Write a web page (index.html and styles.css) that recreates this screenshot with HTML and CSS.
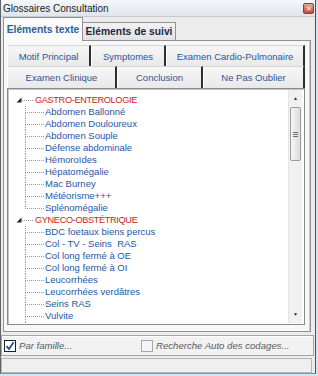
FILE: index.html
```html
<!DOCTYPE html>
<html>

<head>
    <meta charset="UTF-8">
    <meta name="viewport" content="width=device-width, initial-scale=1">
    <title>Glossaires Consultation</title>
    <link rel="stylesheet" href="styles.css">
</head>

<body>
<div class="fenetre">
    <div class="titre">
        <span>Glossaires Consultation</span>
        <span class="fermer">&#x2715;</span>
    </div>

    <div class="onglets">
        <div class="onglet actif">Eléments texte</div>
        <div class="onglet suivi">Eléments de suivi</div>
    </div>

    <div class="panneau">
        <div class="sousrang">
            <div class="sous motif">Motif Principal</div>
            <div class="sous sympt">Symptomes</div>
            <div class="sous cardio">Examen Cardio-Pulmonaire</div>
        </div>
        <div class="sousrang">
            <div class="sous clinique">Examen Clinique</div>
            <div class="sous conclu">Conclusion</div>
            <div class="sous oublier">Ne Pas Oublier</div>
        </div>

        <div class="arbre">
            <ul class="noeuds">
                <li class="famille"><svg class="fleche" width="6" height="6" viewBox="0 0 6 6"><polygon points="5.5,0.5 5.5,5.5 0.5,5.5" fill="#262626"/></svg><span class="nom">GASTRO-ENTEROLOGIE</span><ul class="enfants">
                        <li>Abdomen Ballonné</li>
                        <li>Abdomen Douloureux</li>
                        <li>Abdomen Souple</li>
                        <li>Défense abdominale</li>
                        <li>Hémoroïdes</li>
                        <li>Hépatomégalie</li>
                        <li>Mac Burney</li>
                        <li>Météorisme+++</li>
                        <li>Splénomégalie</li>
                    </ul></li>
                <li class="famille"><svg class="fleche" width="6" height="6" viewBox="0 0 6 6"><polygon points="5.5,0.5 5.5,5.5 0.5,5.5" fill="#262626"/></svg><span class="nom">GYNECO-OBSTÉTRIQUE</span><ul class="enfants">
                        <li>BDC foetaux biens percus</li>
                        <li>Col - TV - Seins &nbsp;RAS</li>
                        <li>Col long fermé à OE</li>
                        <li>Col long fermé à OI</li>
                        <li>Leucorrhées</li>
                        <li>Leucorrhées verdâtres</li>
                        <li>Seins RAS</li>
                        <li>Vulvite</li>
                        <li>Vaginose bactérienne</li>
                    </ul></li>
            </ul>
            <div class="defil">
                <div class="bout">&#9650;</div>
                <div class="curseur"><span></span><span></span><span></span></div>
                <div class="piste"></div>
                <div class="bout">&#9660;</div>
            </div>
        </div>
    </div>

    <div class="options">
        <label class="choix premier"><span class="case coche"><svg width="10" height="10" viewBox="0 0 10 10"><path d="M1.5 5.2 L4 8 L8.6 1.2" fill="none" stroke="#1d4f9d" stroke-width="1.8"/></svg></span>Par famille...</label>
        <label class="choix"><span class="case"></span>Recherche Auto des codages...</label>
    </div>

    <div class="statut"></div>
</div>
</body>

</html>
```

FILE: styles.css
```css
body {
    margin: 0;
    width: 318px;
    height: 376px;
    overflow: hidden;
    background-color: #d2e5f0;
    font-family: "Liberation Sans", Arial, sans-serif;
}

ul {
    list-style: none;
    margin: 0;
    padding: 0;
}

.fenetre {
    width: 316px;
    height: 374px;
    box-sizing: border-box;
    border-left: 1px solid #5f6468;
    border-right: 1px solid #2f5a68;
    border-bottom: 1px solid #7d98a6;
    background-color: #ececec;
    display: flex;
    flex-direction: column;
}

.titre {
    height: 16px;
    flex: none;
    display: flex;
    align-items: center;
    justify-content: space-between;
    padding: 0 1px 0 2px;
    background: linear-gradient(#f4f7fa, #dfe5ec);
    border-bottom: 1px solid #c3cad2;
    font-size: 10px;
    color: #1c1c1c;
}

.fermer {
    width: 9px;
    height: 9px;
    border: 1px solid #8e3b33;
    border-radius: 2px;
    background: linear-gradient(#e8a89c, #c2473c);
    color: white;
    font-size: 7px;
    line-height: 9px;
    text-align: center;
}

.onglets {
    height: 23px;
    flex: none;
    display: flex;
    align-items: flex-end;
    padding-left: 2px;
}

.onglet {
    box-sizing: border-box;
    border: 1px solid #8f9296;
    border-bottom: none;
    font-size: 10.3px;
    font-weight: bold;
    display: flex;
    align-items: center;
    justify-content: center;
}

.actif {
    width: 80px;
    height: 24px;
    margin-bottom: -1px;
    position: relative;
    z-index: 1;
    background-color: #fbfbfb;
    color: #2c5ea6;
}

.suivi {
    width: 93px;
    height: 18px;
    border-left: none;
    background: linear-gradient(#f3f3f3, #e2e2e2);
    color: #1b2a42;
}

.panneau {
    height: 292px;
    flex: none;
    box-sizing: border-box;
    margin: 0 4px 0 2px;
    border: 1px solid #8f9296;
    box-shadow: inset -1px 0 0 #c8cacc;
    background-color: #f8f8f8;
    padding: 4px 4px 0 3px;
    display: flex;
    flex-direction: column;
}

.sousrang {
    display: flex;
    height: 21px;
    flex: none;
}

.sousrang + .sousrang {
    height: 22px;
}

.sous {
    border-top: 1px solid #d6d6d6;
    border-left: 1px solid #ffffff;
    border-right: 2px solid #2e2e2e;
    background: linear-gradient(#f6f6f6, #e9e9e9);
    font-size: 9.5px;
    color: #2f5597;
    display: flex;
    align-items: center;
    justify-content: center;
}

.motif { width: 81px; }
.sympt { width: 72px; }
.cardio { width: 136px; }
.clinique { width: 107px; }
.conclu { width: 83px; }
.oublier { width: 99px; }

.arbre {
    height: 237px;
    flex: none;
    box-sizing: border-box;
    margin-right: 1px;
    border: 1px solid #8a8a8a;
    box-shadow: inset 1px 1px 0 #c4c4c4;
    background-color: white;
    display: flex;
}

.noeuds {
    flex: 1;
    overflow: hidden;
    padding-top: 4.5px;
    font-size: 9.5px;
    line-height: 12.06px;
}

.famille {
    position: relative;
    padding-left: 27px;
    white-space: nowrap;
}

.famille::before {
    content: "";
    position: absolute;
    left: 14px;
    top: 6px;
    width: 11px;
    border-top: 1px dotted #9a9a9a;
}

.fleche {
    position: absolute;
    left: 8px;
    top: 3px;
}

.nom {
    display: block;
    height: 12.06px;
    color: #cc2222;
    font-size: 9.2px;
    letter-spacing: -0.35px;
}

.enfants {
    margin-left: -10px;
}

.enfants li {
    position: relative;
    height: 12.06px;
    padding-left: 20px;
    color: #2457a6;
}

.enfants li::before {
    content: "";
    position: absolute;
    left: 0;
    top: 0;
    width: 18px;
    height: 6px;
    border-left: 1px dotted #9a9a9a;
    border-bottom: 1px dotted #9a9a9a;
}

.enfants li::after {
    content: "";
    position: absolute;
    left: 0;
    top: 6px;
    bottom: 0;
    border-left: 1px dotted #9a9a9a;
}

.enfants li:last-child::after {
    display: none;
}

.defil {
    width: 13px;
    flex: none;
    margin: 1px 2px 1px 0;
    background-color: #f1f1f1;
    border-left: 1px solid #e4e4e4;
    display: flex;
    flex-direction: column;
    align-items: center;
}

.bout {
    height: 17px;
    font-size: 5px;
    line-height: 17px;
    color: #333;
}

.curseur {
    width: 11px;
    height: 54px;
    box-sizing: border-box;
    border: 1px solid #9c9c9c;
    border-radius: 2px;
    background: linear-gradient(90deg, #f6f6f6, #dcdcdc);
    display: flex;
    flex-direction: column;
    align-items: center;
    justify-content: center;
    gap: 1px;
}

.curseur span {
    width: 5px;
    height: 1px;
    background-color: #6d6d6d;
}

.piste {
    flex: 1;
}

.options {
    height: 21px;
    flex: none;
    box-sizing: border-box;
    margin: 3px 1px 0 0;
    border: 1px solid #a3a3a3;
    box-shadow: inset 1px 1px 0 #ffffff;
    background-color: #f2f2f2;
    padding-left: 2px;
    display: flex;
    align-items: center;
}

.choix {
    display: flex;
    align-items: center;
    gap: 3px;
    font-size: 9.6px;
    line-height: 12px;
    font-style: italic;
    color: #5a5a5a;
}

.premier {
    width: 137px;
}

.case {
    width: 12px;
    height: 12px;
    flex: none;
    box-sizing: border-box;
    border: 1px solid #a8a8a8;
    background-color: #f4f4f4;
    display: flex;
    align-items: center;
    justify-content: center;
}

.coche {
    border-color: #1f1f1f;
    background-color: white;
}

.statut {
    height: 15px;
    flex: none;
    box-sizing: border-box;
    margin: 2px 3px 0 0;
    border: 1px solid #b4b4b4;
    background-color: #efefef;
}
```
